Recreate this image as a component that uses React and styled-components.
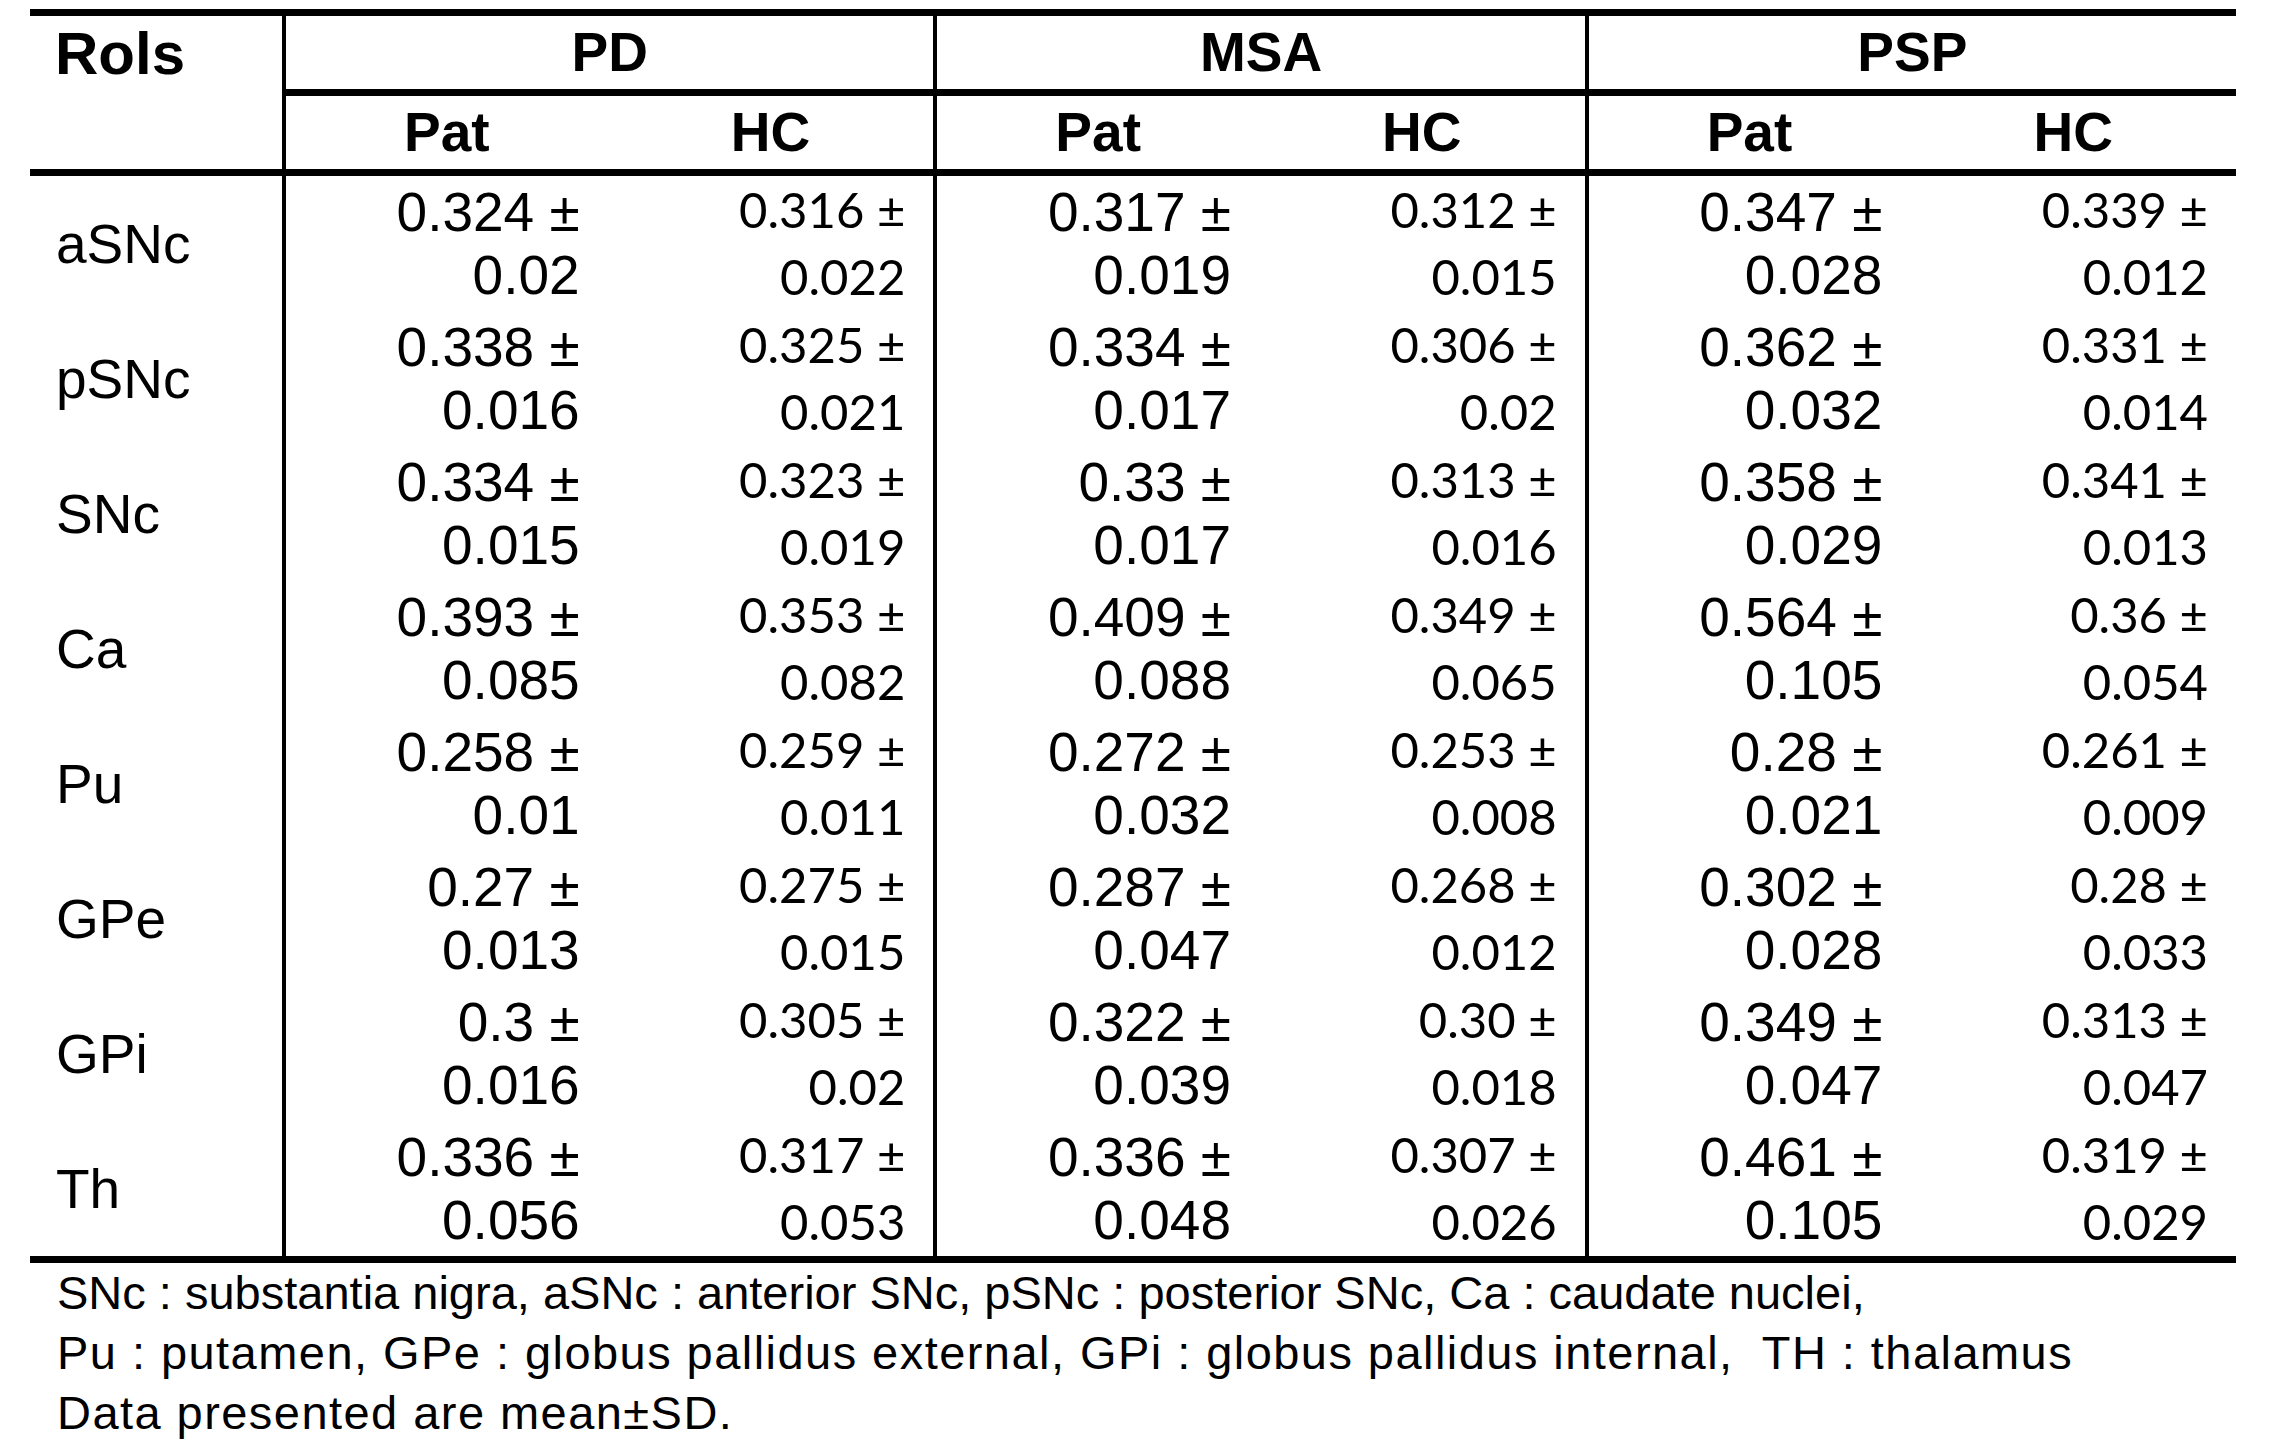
import * as React from "react";
import styled, { createGlobalStyle } from "styled-components";

const GlobalStyle = createGlobalStyle`
  html, body {
    margin: 0;
    padding: 0;
    background: #ffffff;
    color: #000000;
  }
`;

/* ---- data ---- */

const groups = ["PD", "MSA", "PSP"];

const rows = [
  { roi: "aSNc", values: [["0.324", "0.02"], ["0.316", "0.022"], ["0.317", "0.019"], ["0.312", "0.015"], ["0.347", "0.028"], ["0.339", "0.012"]] },
  { roi: "pSNc", values: [["0.338", "0.016"], ["0.325", "0.021"], ["0.334", "0.017"], ["0.306", "0.02"], ["0.362", "0.032"], ["0.331", "0.014"]] },
  { roi: "SNc", values: [["0.334", "0.015"], ["0.323", "0.019"], ["0.33", "0.017"], ["0.313", "0.016"], ["0.358", "0.029"], ["0.341", "0.013"]] },
  { roi: "Ca", values: [["0.393", "0.085"], ["0.353", "0.082"], ["0.409", "0.088"], ["0.349", "0.065"], ["0.564", "0.105"], ["0.36", "0.054"]] },
  { roi: "Pu", values: [["0.258", "0.01"], ["0.259", "0.011"], ["0.272", "0.032"], ["0.253", "0.008"], ["0.28", "0.021"], ["0.261", "0.009"]] },
  { roi: "GPe", values: [["0.27", "0.013"], ["0.275", "0.015"], ["0.287", "0.047"], ["0.268", "0.012"], ["0.302", "0.028"], ["0.28", "0.033"]] },
  { roi: "GPi", values: [["0.3", "0.016"], ["0.305", "0.02"], ["0.322", "0.039"], ["0.30", "0.018"], ["0.349", "0.047"], ["0.313", "0.047"]] },
  { roi: "Th", values: [["0.336", "0.056"], ["0.317", "0.053"], ["0.336", "0.048"], ["0.307", "0.026"], ["0.461", "0.105"], ["0.319", "0.029"]] },
];

/* ---- table ---- */

const Page = styled.div`
  padding: 9px 0 0 30px;
  font-family: "Liberation Sans", Arial, sans-serif;
`;

const Table = styled.div`
  width: 2206px;
  display: grid;
  grid-template-columns: 252px repeat(6, 1fr);
  grid-template-rows: 80px 80px repeat(8, 135px);
  border-top: 7px solid #000;
  border-bottom: 7px solid #000;
`;

const CornerCell = styled.div`
  grid-row: span 2;
  border-bottom: 7px solid #000;
  padding: 1px 0 0 25px;
  font-weight: bold;
  font-size: 60px;
  line-height: 73px;
`;

const GroupHead = styled.div`
  grid-column: span 2;
  border-left: 4px solid #000;
  border-bottom: 7px solid #000;
  text-align: center;
  font-weight: bold;
  font-size: 55px;
  line-height: 73px;
`;

const SubHead = styled.div`
  border-left: ${(p) => (p.$first ? "4px solid #000" : "none")};
  border-bottom: 7px solid #000;
  text-align: center;
  font-weight: bold;
  font-size: 55px;
  line-height: 73px;
`;

const RowLabel = styled.div`
  display: flex;
  align-items: center;
  padding-left: 26px;
  font-size: 55px;
`;

const ValueCell = styled.div`
  border-left: ${(p) => (p.$kind === "pat" ? "4px solid #000" : "none")};
  padding: ${(p) => (p.$kind === "pat" ? "5px" : "0")} 28px 0 0;
  text-align: right;
  font-family: ${(p) =>
    p.$kind === "pat" ? '"Liberation Sans", Arial, sans-serif' : 'Lato, "Open Sans", sans-serif'};
  font-size: ${(p) => (p.$kind === "pat" ? "55px" : "49px")};
  line-height: ${(p) => (p.$kind === "pat" ? "63px" : "67px")};
`;

const ValueLine = styled.div`
  white-space: nowrap;
`;

function Value({ kind, mean, sd }) {
  return (
    <ValueCell $kind={kind}>
      <ValueLine>{mean} ±</ValueLine>
      <ValueLine>{sd}</ValueLine>
    </ValueCell>
  );
}

/* ---- notes ---- */

const Notes = styled.div`
  padding-left: 27px;
  font-size: 47px;
  line-height: 60px;
`;

const NoteLine = styled.div`
  white-space: pre;
  letter-spacing: ${(p) => (p.$wide ? "1.45px" : "0")};
`;

export default function App() {
  return (
    <Page>
      <GlobalStyle />
      <Table>
        <CornerCell>Rols</CornerCell>
        {groups.map((g) => (
          <GroupHead key={g}>{g}</GroupHead>
        ))}
        {groups.map((g) => (
          <React.Fragment key={g}>
            <SubHead $first>Pat</SubHead>
            <SubHead>HC</SubHead>
          </React.Fragment>
        ))}
        {rows.map((r) => (
          <React.Fragment key={r.roi}>
            <RowLabel>{r.roi}</RowLabel>
            {r.values.map(([mean, sd], i) => (
              <Value key={i} kind={i % 2 === 0 ? "pat" : "hc"} mean={mean} sd={sd} />
            ))}
          </React.Fragment>
        ))}
      </Table>
      <Notes>
        <NoteLine>SNc : substantia nigra, aSNc : anterior SNc, pSNc : posterior SNc, Ca : caudate nuclei,</NoteLine>
        <NoteLine $wide>Pu : putamen, GPe : globus pallidus external, GPi : globus pallidus internal,  TH : thalamus</NoteLine>
        <NoteLine $wide>Data presented are mean±SD.</NoteLine>
      </Notes>
    </Page>
  );
}
